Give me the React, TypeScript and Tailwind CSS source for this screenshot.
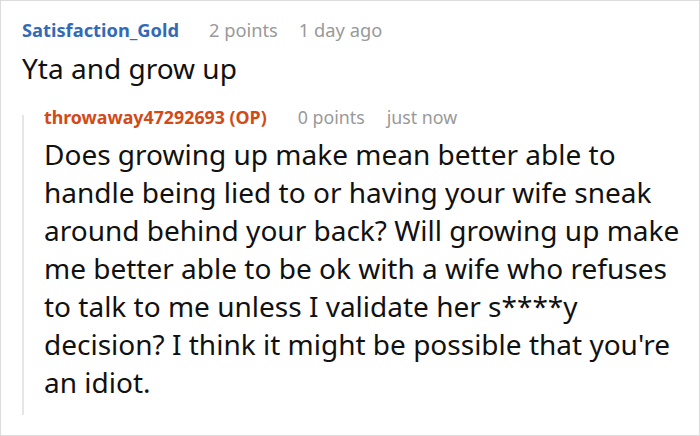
const lines = [
  'Does growing up make mean better able to',
  'handle being lied to or having your wife sneak',
  'around behind your back? Will growing up make',
  'me better able to be ok with a wife who refuses',
  'to talk to me unless I validate her s****y',
  "decision? I think it might be possible that you're",
  'an idiot.',
];

export default function App() {
  return (
    <div className="w-[700px] h-[436px] bg-white border border-[#dcdcdc] overflow-hidden font-['Noto_Sans',sans-serif]">
      <div className="pl-[21px] pt-[16px]">
        <div className="flex items-baseline text-[18.3px] leading-[26px]">
          <span className="font-bold text-[#336ab5]">Satisfaction_Gold</span>
          <span className="ml-[30px] text-[#999999]">2 points</span>
          <span className="ml-[21px] text-[#999999]">1 day ago</span>
        </div>
        <p className="mt-[7px] text-[28px] leading-[36px] text-[#111111]">Yta and grow up</p>
        <div className="mt-[18px] flex">
          <div className="w-[2px] bg-[#e6e6e6] mt-[11px]" />
          <div className="pl-[20px] pb-[14px]">
            <div className="flex items-baseline text-[17.8px] leading-[26px]">
              <span className="font-bold text-[#d24a17]">throwaway47292693 (OP)</span>
              <span className="ml-[31px] text-[#999999]">0 points</span>
              <span className="ml-[22px] text-[#999999]">just now</span>
            </div>
            <p className="mt-[5px] text-[28px] leading-[38px] text-[#111111]">
              {lines.map((l) => (
                <span key={l} className="block whitespace-nowrap">{l}</span>
              ))}
            </p>
          </div>
        </div>
      </div>
    </div>
  );
}
